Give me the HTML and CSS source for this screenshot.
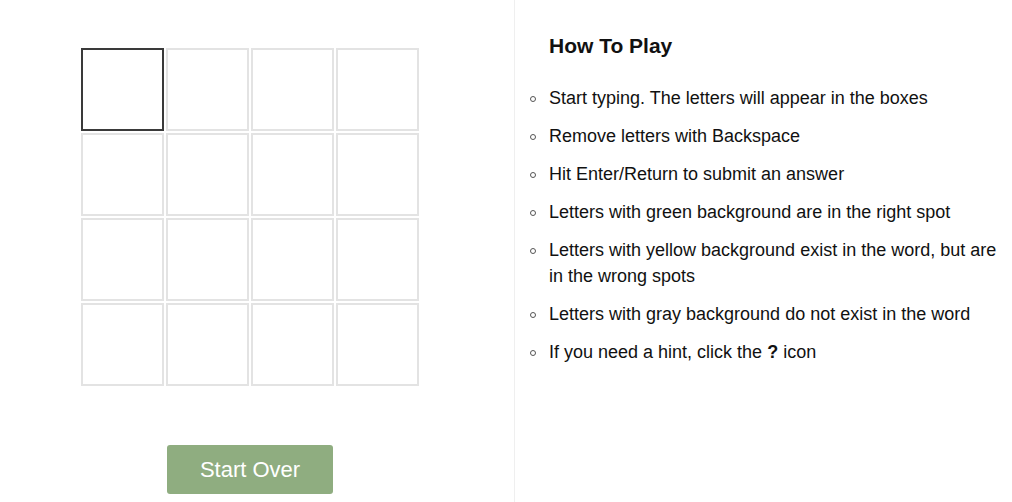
FILE: index.html
```html
<!DOCTYPE html>
<html>
<head>
<meta charset="utf-8">
<link rel="stylesheet" href="styles.css">
</head>
<body>
<div class="page">
  <div class="game">
    <div class="board">
      <div class="cell active"></div><div class="cell"></div><div class="cell"></div><div class="cell"></div>
      <div class="cell"></div><div class="cell"></div><div class="cell"></div><div class="cell"></div>
      <div class="cell"></div><div class="cell"></div><div class="cell"></div><div class="cell"></div>
      <div class="cell"></div><div class="cell"></div><div class="cell"></div><div class="cell"></div>
    </div>
    <button class="restart">Start Over</button>
  </div>
  <div class="help">
    <h2 class="title">How To Play</h2>
    <ul class="rules">
      <li><span>Start typing. The letters will appear in the boxes</span></li>
      <li><span>Remove letters with Backspace</span></li>
      <li><span>Hit Enter/Return to submit an answer</span></li>
      <li><span>Letters with green background are in the right spot</span></li>
      <li><span>Letters with yellow background exist in the word, but are in the wrong spots</span></li>
      <li><span>Letters with gray background do not exist in the word</span></li>
      <li><span>If you need a hint, click the <b>?</b> icon</span></li>
    </ul>
  </div>
</div>
</body>
</html>
```

FILE: styles.css
```css
html, body {
  margin: 0;
  padding: 0;
  background: #fff;
  font-family: "Liberation Sans", Arial, sans-serif;
  color: #111;
}
.page {
  display: flex;
  height: 502px;
}
.game {
  box-sizing: border-box;
  flex: 0 0 515px;
  padding: 48px 14px 0 0;
  border-right: 1px solid #efefef;
  display: flex;
  flex-direction: column;
  align-items: center;
}
.board {
  display: grid;
  grid-template-columns: repeat(4, 83px);
  grid-auto-rows: 83px;
  gap: 2px;
}
.cell {
  box-sizing: border-box;
  border: 2px solid #e3e3e3;
  background: #fff;
}
.cell.active {
  border-color: #3a3a3a;
}
.restart {
  margin-top: 59px;
  width: 166px;
  height: 49px;
  border: none;
  border-radius: 3px;
  background: #8fad80;
  color: #fff;
  font-family: "Liberation Sans", Arial, sans-serif;
  font-size: 22px;
}
.help {
  flex: 1 1 auto;
  padding: 32px 8px 0 34px;
}
.title {
  margin: 0 0 25px 0;
  font-size: 21px;
  line-height: 28px;
  font-weight: bold;
}
.rules {
  margin: 0;
  padding: 0;
  list-style: none;
  font-size: 18px;
  line-height: 26px;
}
.rules li {
  display: flex;
  margin: 0 0 12px -19px;
}
.rules li::before {
  content: "";
  flex: 0 0 auto;
  box-sizing: border-box;
  width: 6px;
  height: 6px;
  margin: 11px 13px 0 0;
  border: 1px solid #555;
  border-radius: 50%;
}
```
